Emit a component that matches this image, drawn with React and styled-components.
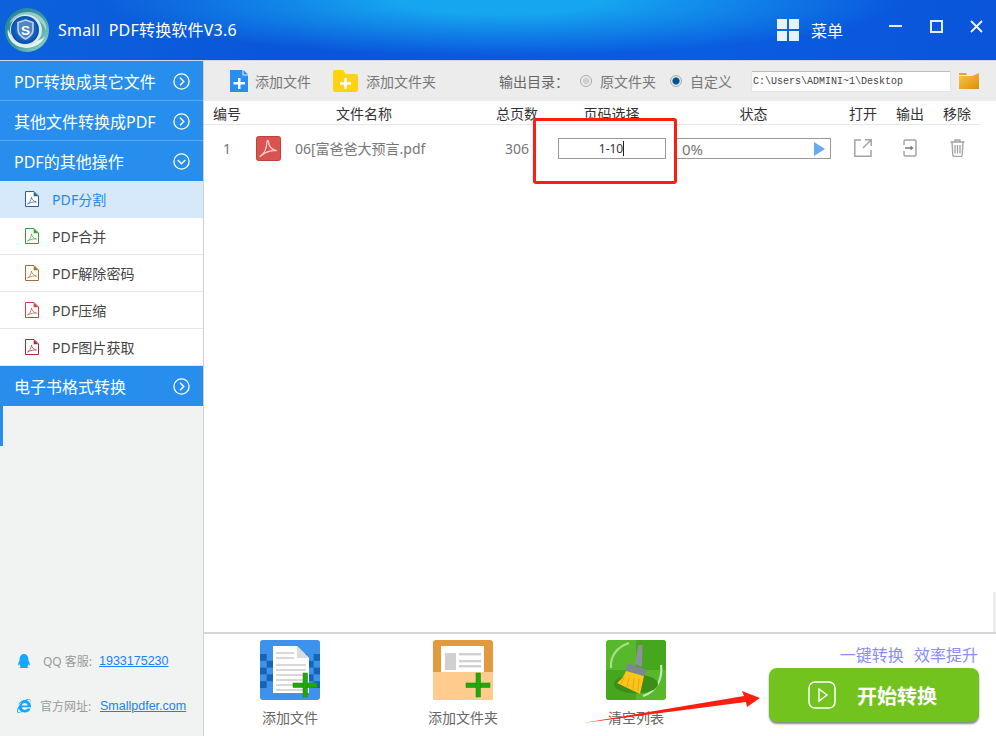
import React from "react";
import styled, { createGlobalStyle } from "styled-components";
import { FaQq, FaInternetExplorer } from "react-icons/fa";

const FONT = `"Noto Sans", "Noto Sans CJK SC", sans-serif`;

const Global = createGlobalStyle`
  html, body { margin: 0; padding: 0; background: #fff; }
  * { box-sizing: border-box; }
`;

const Window = styled.div`
  position: relative;
  width: 996px;
  height: 736px;
  overflow: hidden;
  display: flex;
  flex-direction: column;
  background: #fff;
  font-family: ${FONT};
`;

const Header = styled.header`
  height: 61px;
  flex: none;
  display: flex;
  align-items: center;
  padding-left: 5px;
  color: #fff;
  border-bottom: 1px solid #cfd8e4;
  background:
    radial-gradient(ellipse 400px 56px at 500px 0, #16a6f0 0%, #16a6f0 25%, rgba(22,166,240,0) 100%),
    linear-gradient(100deg, #0d62dc 0%, #0a55da 30%, #0a5ce0 70%, #0a55da 100%);
`;

const Title = styled.h1`
  margin: 0 0 0 9px;
  font-size: 16px;
  font-weight: 400;
  line-height: 22px;
  white-space: pre;
  letter-spacing: 0.2px;
`;

const MenuButton = styled.div`
  margin-left: auto;
  display: flex;
  align-items: center;
  gap: 12px;
  font-size: 16px;
`;

const WinControls = styled.div`
  display: flex;
  align-items: center;
  margin: 0 13px 0 46px;
  gap: 27.5px;
  height: 30px;
  padding-bottom: 8px;
`;

const Body = styled.div`
  flex: 1;
  min-height: 0;
  display: flex;
`;

const Sidebar = styled.aside`
  width: 204px;
  flex: none;
  display: flex;
  flex-direction: column;
  background: #f1f3f3;
  border-right: 1px solid #cfcfcf;
`;

const Head = styled.div`
  height: 40px;
  flex: none;
  display: flex;
  align-items: center;
  justify-content: space-between;
  padding: 1px 13px 0 14px;
  background: #288eee;
  color: #fff;
  font-size: 16px;
  border-bottom: 1px solid ${p => (p.$sep ? "#5ba9f3" : "#288eee")};
`;

const SubItem = styled.div`
  height: 37px;
  flex: none;
  display: flex;
  align-items: center;
  gap: 13px;
  padding-left: 25px;
  font-size: 14px;
  background: ${p => (p.$active ? "#d6e9fb" : "#fff")};
  color: ${p => (p.$active ? "#1f88ee" : "#444")};
  border-bottom: 1px solid ${p => (p.$active ? "#d6e9fb" : "#e8e8e8")};
  letter-spacing: 0.1px;
`;

const Strip = styled.div`
  width: 3px;
  height: 40px;
  flex: none;
  background: #288eee;
`;

const SideFooter = styled.div`
  margin-top: auto;
  padding: 0 0 21px 17px;
  display: flex;
  flex-direction: column;
  gap: 27px;
`;

const ContactRow = styled.div`
  display: flex;
  align-items: center;
  height: 18px;
  font-size: 12px;
  color: #999;
  white-space: pre;
`;

const ContactLabel = styled.span`
  margin-left: ${p => p.$ml}px;
  width: ${p => p.$w}px;
`;

const ContactLink = styled.a`
  font-family: "Liberation Sans", sans-serif;
  font-size: 12.5px;
  color: #1a80ff;
  text-decoration: underline;
`;

const Main = styled.main`
  flex: 1;
  min-width: 0;
  display: flex;
  flex-direction: column;
`;

const Toolbar = styled.div`
  height: 40px;
  flex: none;
  display: flex;
  align-items: center;
  padding-left: 26px;
  background: #ececec;
  font-size: 14px;
  color: #777;
`;

const ToolButton = styled.div`
  display: flex;
  align-items: center;
  gap: ${p => p.$gap}px;
  margin-left: ${p => p.$ml || 0}px;
`;

const OutLabel = styled.span`
  margin-left: 63px;
  width: 81px;
  color: #666;
`;

const Radio = styled.label`
  display: flex;
  align-items: center;
  gap: 8px;
  margin-right: ${p => p.$mr}px;
`;

const RadioDot = styled.span`
  width: 12px;
  height: 12px;
  border-radius: 50%;
  border: 1px solid #a8a8a8;
  background: ${p =>
    p.$on
      ? "radial-gradient(circle, #0b4f86 0 2.8px, #58a8d8 3.6px, #e8e8e8 4px)"
      : "radial-gradient(circle, #d0d0d0 0 2.5px, #f2f2f2 4.5px)"};
`;

const PathBox = styled.div`
  width: 200px;
  height: 21px;
  margin-right: 8px;
  padding-left: 1px;
  display: flex;
  align-items: center;
  background: #fff;
  border: 1px solid #e4e4e4;
  border-top-color: #bdbdbd;
  border-radius: 2px;
  font-family: "Liberation Mono", monospace;
  font-size: 10px;
  color: #444;
  white-space: pre;
`;

const cols = "46px 228px 78px 111px 173px 46px 48px 46px";

const TableHead = styled.div`
  width: 776px;
  height: 24px;
  flex: none;
  display: grid;
  grid-template-columns: ${cols};
  align-items: center;
  justify-items: center;
  font-size: 14px;
  color: #333;
  border-bottom: 1px solid #e8e8e8;
`;

const Row = styled.div`
  width: 776px;
  height: 46px;
  flex: none;
  display: grid;
  grid-template-columns: ${cols};
  align-items: center;
  justify-items: center;
  font-size: 14px;
  color: #777;
`;

const FileCell = styled.div`
  justify-self: stretch;
  display: flex;
  align-items: center;
  gap: 14px;
  padding-left: 6px;
  white-space: pre;
`;

const PageInput = styled.div`
  width: 108px;
  height: 21px;
  border: 1px solid #999;
  display: flex;
  align-items: center;
  justify-content: center;
  font-size: 12px;
  color: #333;
`;

const Caret = styled.span`
  width: 1px;
  height: 15px;
  background: #222;
`;

const Progress = styled.div`
  justify-self: end;
  margin-right: 9px;
  width: 155px;
  height: 21px;
  border: 1px solid #999;
  display: flex;
  align-items: center;
  justify-content: space-between;
  padding: 1px 5px 0 5px;
  font-size: 15px;
  color: #777;
`;

const Spacer = styled.div`
  flex: 1;
`;

const Footer = styled.div`
  height: 104px;
  flex: none;
  display: flex;
  border-top: 2px solid #d6d6d6;
`;

const Tile = styled.div`
  width: 173px;
  flex: none;
  padding: 6px 1px 0 0;
  display: flex;
  flex-direction: column;
  align-items: center;
  gap: 7px;
  font-size: 14px;
  color: #666;
`;

const CtaColumn = styled.div`
  margin-left: auto;
  padding: 10px 17px 0 0;
  display: flex;
  flex-direction: column;
  align-items: flex-end;
  gap: 2px;
`;

const Slogan = styled.div`
  font-size: 16px;
  line-height: 22px;
  margin-right: 1px;
  color: #8b8cf8;
  white-space: pre;
  word-spacing: 1px;
`;

const StartButton = styled.div`
  width: 210px;
  height: 54px;
  display: flex;
  align-items: center;
  gap: 21px;
  padding-left: 39px;
  border-radius: 8px;
  background: #72c31e;
  box-shadow: 0 2px 2px #8a8a8a;
  color: #fff;
  font-size: 20px;
  font-weight: 700;
`;

const RedBox = styled.div`
  position: absolute;
  left: 533px;
  top: 118px;
  width: 144px;
  height: 66px;
  border: 3px solid #fb1f12;
  border-radius: 3px;
`;

const ArrowOverlay = styled.svg`
  position: absolute;
  left: 575px;
  top: 685px;
`;

const ScrollThumb = styled.div`
  position: absolute;
  right: 0;
  top: 592px;
  width: 3px;
  height: 40px;
  background: #ececec;
`;

const Chevron = ({ down }) => (
  <svg width="17" height="17" viewBox="0 0 17 17" fill="none" stroke="#fff" strokeWidth="1.3">
    <circle cx="8.5" cy="8.5" r="7.6" />
    <path d={down ? "M4.8 7 8.5 10.7 12.2 7" : "M7 4.8 10.7 8.5 7 12.2"} strokeWidth="1.5" />
  </svg>
);

const DocIcon = ({ color }) => (
  <svg width="14" height="16" viewBox="0 0 14 16" fill="none">
    <path d="M.5.5h8.5l4.5 4.5v10.5H.5z" fill="#fff" stroke={color} />
    <path d="M8.7.7v4.5h4.6z" fill={color} />
    <path d="M2.5 13c2-1 3.6-3.6 4-7 .3 2.500 2 4.500 5 5-2.800-.2-5.800.3-9 2z" stroke={color} strokeWidth=".9" opacity=".75" />
  </svg>
);

const Logo = () => (
  <svg width="44" height="44" viewBox="0 0 44 44">
    <defs>
      <linearGradient id="ring" x1="0" y1="0" x2="1" y2="1">
        <stop offset="0" stopColor="#1f7f92" />
        <stop offset=".55" stopColor="#3f9ea2" />
        <stop offset="1" stopColor="#a8dccb" />
      </linearGradient>
      <radialGradient id="core" cx=".5" cy=".5" r=".5">
        <stop offset="0" stopColor="#2f82d8" />
        <stop offset=".8" stopColor="#0f5cc0" />
        <stop offset="1" stopColor="#0d4aa0" />
      </radialGradient>
    </defs>
    <circle cx="22" cy="22" r="22" fill="url(#ring)" />
    <path d="M4 16C8 4 26 0 36 9c5 5 6 10 5 14-2-7-8-13-17-13C14 10 7 12 4 16z" fill="#eaf6f2" opacity=".55" />
    <path d="M40 28C36 40 18 44 8 35 3 30 2 25 3 21c2 7 8 13 17 13 10 0 17-2 20-6z" fill="#f2faf6" opacity=".9" />
    <ellipse cx="21" cy="22" rx="16" ry="15.500" fill="#d5ecec" />
    <circle cx="20" cy="22" r="14" fill="url(#core)" />
    <path d="M20.500 12l7.500 2.500v7c0 4.500-3.200 7.500-7.500 9.500-4.300-2-7.500-5-7.500-9.500v-7z" fill="#4f86c0" stroke="#c3d3e6" strokeWidth="1.600" />
    <text x="20.500" y="27" textAnchor="middle" fontSize="13.500" fontWeight="700" fill="#fff" fontFamily="Liberation Sans, sans-serif">S</text>
  </svg>
);

const WindowsGlyph = () => (
  <svg width="22" height="22" viewBox="0 0 22 22" fill="#e8f2fd">
    <rect width="10" height="10" />
    <rect x="12" width="10" height="10" />
    <rect y="12" width="10" height="10" />
    <rect x="12" y="12" width="10" height="10" />
  </svg>
);

const AddFileSmall = () => (
  <svg width="18" height="22" viewBox="0 0 18 22">
    <path d="M0 0h12.500v5.500H18V22H0z" fill="#2a8df0" />
    <path d="M13.500 0 18 4.500h-4.500z" fill="#2a8df0" />
    <path d="M8 8h2.500v4H15v2.500h-4.500V19H8v-4.500H3.500V12H8z" fill="#fff" />
  </svg>
);

const AddFolderSmall = () => (
  <svg width="25" height="22" viewBox="0 0 25 22">
    <path d="M2 0h8l3 4h10a2 2 0 0 1 2 2v14a2 2 0 0 1-2 2H2a2 2 0 0 1-2-2V2a2 2 0 0 1 2-2z" fill="#ffd30e" />
    <path d="M11.200 8h2.600v4.300H18v2.400h-4.200V19h-2.600v-4.300H7v-2.400h4.200z" fill="#fff" />
  </svg>
);

const FolderSmall = () => (
  <svg width="20" height="16" viewBox="0 0 20 16">
    <defs>
      <linearGradient id="fold" x1="0" y1="0" x2="1" y2="1">
        <stop offset="0" stopColor="#fbc64a" />
        <stop offset="1" stopColor="#d99008" />
      </linearGradient>
    </defs>
    <path d="M0 0h7l1 2H0z" fill="#e2a52c" />
    <path d="M0 3h13l7-3v16H0z" fill="url(#fold)" />
  </svg>
);

const PdfTile = () => (
  <svg width="25" height="25" viewBox="0 0 25 25" fill="none">
    <rect x=".5" y=".5" width="24" height="24" rx="2" fill="#d9534f" stroke="#c4403c" />
    <path d="M4.500 20c3.500-2 6-7 6.500-14 .2-2 1.800-2 1.700.2-.3 3.500 2.800 7.800 8 8.500-4-.5-10.500.8-15 4.500-1.500 1.200-2 1.500-1.200.8z" stroke="#f8d5d3" strokeWidth="1.300" />
  </svg>
);

const OpenIcon = () => (
  <svg width="18" height="18" viewBox="0 0 18 18" fill="none" stroke="#a3a3a3" strokeWidth="1.500">
    <path d="M7 1H.8v16.200H17V11" />
    <path d="M11 .8h6.200V7M17 1 9 9" />
  </svg>
);

const OutputIcon = () => (
  <svg width="14" height="18" viewBox="0 0 14 18" fill="none" stroke="#a3a3a3" strokeWidth="1.500">
    <path d="M1 6V2.500A1.500 1.500 0 0 1 2.500 1h9A1.500 1.500 0 0 1 13 2.500v13a1.500 1.500 0 0 1-1.500 1.500h-9A1.500 1.500 0 0 1 1 15.500V12" />
    <path d="M2 9h6" stroke="#777" />
    <path d="M7.500 6.500 10.500 9l-3 2.500z" fill="#777" stroke="none" />
  </svg>
);

const TrashIcon = () => (
  <svg width="15" height="18" viewBox="0 0 15 18" fill="none" stroke="#a3a3a3" strokeWidth="1.300">
    <path d="M.5 3h14M5 3V1h5v2M2 3l.8 13.200c0 .6.500 1.100 1 1.100h7.400c.5 0 1-.5 1-1.100L13 3" />
    <path d="M5 6v8.500M7.500 6v8.500M10 6v8.500" />
  </svg>
);

const GreenPlus = ({ cx = 45, cy = 45 }) => (
  <g>
    <rect x={cx - 12} y={cy - 2} width="24" height="4.500" fill="#23a80c" stroke="#158a05" strokeWidth=".5" />
    <rect x={cx - 2} y={cy - 12} width="4.500" height="24" fill="#23a80c" stroke="#158a05" strokeWidth=".5" />
  </g>
);

const AddFileTile = () => {
  const squares = [];
  for (let r = 0; r < 5; r++) {
    for (let c = 0; c < 9; c++) {
      if ((r + c) % 2 === 0) squares.push(<rect key={`${r}-${c}`} x={c * 6.7} y={14 + r * 6.800} width="6.700" height="6.800" fill="#1565b4" />);
    }
  }
  return (
    <svg width="60" height="60" viewBox="0 0 60 60">
      <rect width="60" height="60" rx="3" fill="#3d93ec" />
      {squares}
      <path d="M13 6h24l12 12v35H13z" fill="#fff" />
      <path d="M37 6l12 12H37z" fill="#dcdcdc" />
      {[11, 16, 23, 28, 33, 38, 43, 48].map((y, i) => (
        <rect key={y} x="16" y={y + 1} width={i < 2 ? 18 : 30} height="2" fill="#d8d8d8" />
      ))}
      <GreenPlus />
    </svg>
  );
};

const AddFolderTile = () => (
  <svg width="60" height="60" viewBox="0 0 60 60">
    <rect width="60" height="60" rx="3" fill="#e39a3f" />
    <rect x="8" y="6" width="43" height="30" fill="#fff" />
    <rect x="12" y="13" width="11" height="17" fill="#d0d0d0" />
    {[13, 20, 25].map(y => (
      <rect key={y} x="26" y={y} width="22" height="2.400" fill="#d0d0d0" />
    ))}
    <path d="M0 32h60v25a3 3 0 0 1-3 3H3a3 3 0 0 1-3-3z" fill="#ffcc8e" />
    <GreenPlus />
  </svg>
);

const BroomTile = () => (
  <svg width="60" height="60" viewBox="0 0 60 60" fill="none">
    <rect width="60" height="60" rx="3" fill="#58b82b" />
    <path d="M30 0h27a3 3 0 0 1 3 3v27H30z" fill="#46a61e" />
    <path d="M0 30h30v30H3a3 3 0 0 1-3-3z" fill="#46a61e" />
    <path d="M5 28C4 16 11 7 23 3" stroke="#a9dc8f" strokeWidth="2.200" />
    <path d="M55 25c2 14-5 27-18 31" stroke="#c2e6b2" strokeWidth="2.200" />
    <ellipse cx="30" cy="44" rx="22" ry="9.500" fill="#3c8e18" />
    <path d="M32 5h4.500l-.5 22-7-3z" fill="#8d9199" />
    <path d="M21 23l20 7-3 6-18-5z" fill="#7d8794" />
    <path d="M20 31l18 5-4 18-23-11c4-3 7-7 9-12z" fill="#fdc51c" />
    <path d="M18 37l-3 7M23 38l-2 9M28 38l-1 12M33 39l-1 12" stroke="#e3a500" strokeWidth=".9" />
  </svg>
);

const PlayGlyph = () => (
  <svg width="28" height="28" viewBox="0 0 28 28" fill="none" stroke="#fff">
    <rect x="1" y="1" width="26" height="26" rx="6" strokeWidth="1.500" />
    <path d="M11 8l8 6-8 6z" strokeWidth="1.400" />
  </svg>
);

const subItems = [
  ["PDF分割", "#2a5f9e", true],
  ["PDF合并", "#3a9a3a"],
  ["PDF解除密码", "#a86f2c"],
  ["PDF压缩", "#cf4040"],
  ["PDF图片获取", "#a32a3a"],
];

export default function App() {
  return (
    <Window>
      <Global />
      <Header>
        <Logo />
        <Title>Small  PDF转换软件V3.6</Title>
        <MenuButton>
          <WindowsGlyph />
          <span>菜单</span>
        </MenuButton>
        <WinControls>
          <svg width="13" height="13" viewBox="0 0 13 13"><rect y="5" width="13" height="2" fill="#e4edf8" /></svg>
          <svg width="13" height="13" viewBox="0 0 13 13" fill="none"><rect x="1" y="1" width="11" height="11" stroke="#e4edf8" strokeWidth="2" /></svg>
          <svg width="13" height="13" viewBox="0 0 13 13" fill="none"><path d="M1 1l11 11M12 1 1 12" stroke="#f2f6fb" strokeWidth="1.800" /></svg>
        </WinControls>
      </Header>
      <Body>
        <Sidebar>
          <Head $sep>PDF转换成其它文件<Chevron /></Head>
          <Head $sep>其他文件转换成PDF<Chevron /></Head>
          <Head>PDF的其他操作<Chevron down /></Head>
          {subItems.map(([label, color, active]) => (
            <SubItem key={label} $active={active}>
              <DocIcon color={color} />
              {label}
            </SubItem>
          ))}
          <Head>电子书格式转换<Chevron /></Head>
          <Strip />
          <SideFooter>
            <ContactRow>
              <FaQq size={14} color="#12a8ff" />
              <ContactLabel $ml={12} $w={56}>QQ 客服:</ContactLabel>
              <ContactLink>1933175230</ContactLink>
            </ContactRow>
            <ContactRow>
              <FaInternetExplorer size={14} color="#12a8ff" />
              <ContactLabel $ml={9} $w={60}>官方网址:</ContactLabel>
              <ContactLink>Smallpdfer.com</ContactLink>
            </ContactRow>
          </SideFooter>
        </Sidebar>
        <Main>
          <Toolbar>
            <ToolButton $gap={7}><AddFileSmall />添加文件</ToolButton>
            <ToolButton $gap={8} $ml={22}><AddFolderSmall />添加文件夹</ToolButton>
            <OutLabel>输出目录：</OutLabel>
            <Radio $mr={14}><RadioDot />原文件夹</Radio>
            <Radio $mr={19}><RadioDot $on />自定义</Radio>
            <PathBox>C:\Users\ADMINI~1\Desktop</PathBox>
            <FolderSmall />
          </Toolbar>
          <TableHead>
            <span>编号</span>
            <span>文件名称</span>
            <span>总页数</span>
            <span>页码选择</span>
            <span>状态</span>
            <span>打开</span>
            <span>输出</span>
            <span>移除</span>
          </TableHead>
          <Row>
            <span>1</span>
            <FileCell><PdfTile />06[富爸爸大预言.pdf</FileCell>
            <span>306</span>
            <PageInput>1-10<Caret /></PageInput>
            <Progress>
              0%
              <svg width="11" height="14" viewBox="0 0 11 14"><path d="M0 0l11 7-11 7z" fill="#6aa9f4" /></svg>
            </Progress>
            <OpenIcon />
            <OutputIcon />
            <TrashIcon />
          </Row>
          <Spacer />
          <Footer>
            <Tile><AddFileTile />添加文件</Tile>
            <Tile><AddFolderTile />添加文件夹</Tile>
            <Tile><BroomTile />清空列表</Tile>
            <CtaColumn>
              <Slogan>一键转换  效率提升</Slogan>
              <StartButton><PlayGlyph />开始转换</StartButton>
            </CtaColumn>
          </Footer>
        </Main>
      </Body>
      <ScrollThumb />
      <RedBox />
      <ArrowOverlay width="190" height="45" viewBox="0 0 190 45">
        <path d="M8 38 169 11 167 6 185 13 172 22 171 17z" fill="#fb1f12" />
      </ArrowOverlay>
    </Window>
  );
}
